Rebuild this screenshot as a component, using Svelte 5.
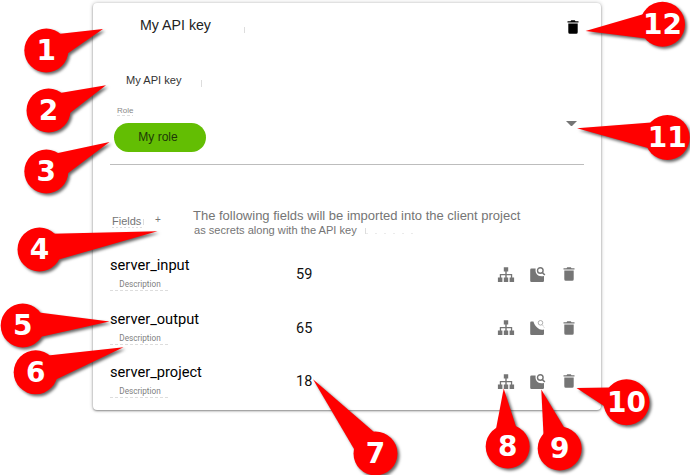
<script>
  const rows = [
    { name: 'server_input', value: 59 },
    { name: 'server_output', value: 65, faint: true },
    { name: 'server_project', value: 18 }
  ];

  const callouts = [
    { n: 1, x: 46.3, y: 50.5, r: 22, tip: '103,29', a: '58,34', b: '67,54' },
    { n: 2, x: 48.5, y: 110.5, r: 22, tip: '106,85.3', a: '60,93', b: '70,113' },
    { n: 3, x: 46.3, y: 171.5, r: 22, tip: '109.5,142', a: '58,153', b: '67,174' },
    { n: 4, x: 39.5, y: 249.5, r: 22, tip: '157.5,231.3', a: '52,233.7', b: '57,260' },
    { n: 5, x: 22.7, y: 325.5, r: 22, tip: '109.5,321.5', a: '39,312.5', b: '40,337' },
    { n: 6, x: 35.7, y: 372.3, r: 22, tip: '123.5,347.3', a: '48,355.5', b: '55,380' },
    { n: 7, x: 375.5, y: 453.5, r: 22, tip: '313,379.3', a: '374,432', b: '354,449' },
    { n: 8, x: 507.7, y: 446.5, r: 22, tip: '503.7,388.5', a: '496,429', b: '516.5,428' },
    { n: 9, x: 559.7, y: 448.5, r: 22, tip: '541.3,389.5', a: '543.5,435', b: '564.5,428' },
    { n: 10, x: 626.5, y: 402.3, r: 23, tip: '576.5,388', a: '610,387.5', b: '604,406' },
    { n: 11, x: 667.3, y: 137.5, r: 22.5, tip: '577,128.3', a: '651,122.5', b: '648,148' },
    { n: 12, x: 662.5, y: 24.3, r: 22.5, tip: '585.5,31', a: '643,14.3', b: '646,38.5' }
  ];
</script>

{#snippet trash()}
  <svg class="trash" viewBox="0 0 12 14">
    <path d="M.5 1.2h3L4.2.2h3.6l.7 1h3v1.4H.5zM1.3 3.4h9.4v8.8q0 1.5-1.5 1.5H2.8q-1.5 0-1.5-1.5z" />
  </svg>
{/snippet}

<main>
  <section class="card">
    <header>
      <h1>My API key</h1>
      <i class="trace t1"></i>
      {@render trash()}
    </header>
    <div class="name"><span>My API key</span><i class="trace t2"></i></div>
    <div class="select">
      <div>
        <div class="role"><span>Role</span></div>
        <div class="chip">My role</div>
      </div>
      <svg class="arrow" viewBox="0 0 11 5.5"><path d="M0 0h11L5.5 5.5z" /></svg>
    </div>
    <div class="fields">
      <span class="label">Fields</span><i class="bar"></i><span class="plus">+</span>
      <div class="hint">
        <p>The following fields will be imported into the client project</p>
        <p class="small">as secrets along with the API key<i class="bar"></i><i class="trace t3"></i></p>
      </div>
    </div>
    <div class="rows">
      {#each rows as row}
        <div class="row">
          <div class="key">
            <div class="title">{row.name}</div>
            <div class="desc">Description</div>
          </div>
          <div class="value">{row.value}</div>
          <div class="icons">
            <svg class="tree" viewBox="0 0 18 16">
              <path d="M6.8.3h4.4v4.3H9.7V7h5.5v3.6h1.9V15h-4.5v-4.4h1.3V8.3H9.7v2.3h1.5V15H6.8v-4.4h1.5V8.3H4.1v2.3h1.3V15H.9v-4.4h1.9V7h5.5V4.6H6.8z" />
            </svg>
            <svg class="search" viewBox="0 0 16 16">
              {#if row.faint}
                <path d="M1.2 1.6H3.4Q5 7 9.5 9.300q2 .8 4.500.2V13.800q0 1.200-1.200 1.200H1.400Q.2 15 .2 13.800V2.700Q.2 1.600 1.200 1.600z" />
                <circle cx="10.500" cy="2.800" r="2.300" fill="none" stroke="#999" stroke-width=".8" />
                <path d="M12.500 5l2 3" stroke="#bbb" stroke-dasharray="1 1" />
              {:else}
                <path d="M1.400 1.500h4.200Q5 6.500 8.200 8.600q2.300 1.200 5.800.5V13.800q0 1.200-1.200 1.200H1.400Q.2 15 .2 13.800V2.700Q.2 1.500 1.400 1.500z" />
                <circle cx="10.300" cy="3.500" r="2.800" fill="#fff" stroke="currentColor" stroke-width="1.400" />
                <path d="M12.300 5.500l2.500 2.500" stroke="currentColor" stroke-width="1.600" />
              {/if}
            </svg>
            {@render trash()}
          </div>
        </div>
      {/each}
    </div>
  </section>

  <svg class="callouts" viewBox="0 0 690 475">
    {#each callouts as c}
      <g class="callout">
        <circle cx={c.x} cy={c.y} r={c.r} />
        <polygon points="{c.a} {c.tip} {c.b} {c.x},{c.y}" />
      </g>
      <text x={c.x} y={c.y + 9.7}>{c.n}</text>
    {/each}
  </svg>
</main>

<style>
  :global(body) { background: #fff; }
  main {
    position: relative;
    width: 690px;
    height: 475px;
    box-sizing: border-box;
    padding: 3px 0 0 93px;
    overflow: hidden;
    font-family: "Liberation Sans", Arial, sans-serif;
    color: #757575;
  }
  h1, p { margin: 0; font-weight: 400; }
  svg { display: block; fill: currentColor; flex: none; }
  .card {
    width: 508px;
    height: 407px;
    box-sizing: border-box;
    padding: 0 17px;
    border-radius: 4px;
    background: #fff;
    box-shadow: 0 1px 2px rgba(0,0,0,.38), 0 0 4px rgba(0,0,0,.24);
  }
  header {
    height: 65px;
    display: flex;
    align-items: flex-start;
    padding: 14px 5px 0 30px;
    box-sizing: border-box;
    color: #000;
  }
  h1 { font-size: 14.2px; line-height: 17px; color: #222; white-space: nowrap; }
  header .trash { margin: 3px 0 0 auto; }
  .trash { width: 12px; height: 14px; }
  .trace {
    height: 1px;
    background: repeating-linear-gradient(90deg, #ddd 0 2px, transparent 2px 9px);
  }
  .t1 { width: 34px; height: 6px; margin-top: 10px; background: linear-gradient(#ddd, #ddd) right / 1px 6px no-repeat; }
  .name { height: 38px; padding: 4px 0 0 16px; box-sizing: border-box; display: flex; font-size: 11.1px; line-height: 17px; color: #333; }
  .t2 { width: 20px; height: 7px; margin-top: 8px; background: linear-gradient(#ddd, #ddd) right / 1px 7px no-repeat; }
  .select {
    height: 58px;
    padding: 0 7px 0 4px;
    border-bottom: 1px solid #bdbdbd;
    display: flex;
    justify-content: space-between;
    align-items: flex-start;
  }
  .role { height: 17px; box-sizing: border-box; padding-left: 3px; display: flex; align-items: flex-start; font-size: 8px; line-height: 10px; color: #888; }
  .role span { background: repeating-linear-gradient(90deg, #ddd 0 3px, transparent 3px 5px) bottom / 100% 1px no-repeat; }
  .chip {
    width: 92px;
    height: 29px;
    border-radius: 15px;
    background: #63be03;
    text-align: center;
    font-size: 12px;
    line-height: 28px;
    text-indent: -4px;
    color: #1d3808;
  }
  .arrow { width: 11px; height: 5.5px; margin-top: 14.500px; }
  .fields { height: 91px; display: flex; align-items: flex-start; padding: 42px 0 0 2px; box-sizing: border-box; }
  .label { width: 31px; font-size: 11px; line-height: 13px; margin-top: 8px; background: repeating-linear-gradient(90deg, #ddd 0 2px, transparent 2px 4px) bottom / 100% 1px no-repeat; }
  .bar { display: inline-block; width: 1px; height: 6px; background: #ddd; }
  .fields > .bar { margin-top: 12px; }
  .plus { width: 38px; padding-left: 11px; box-sizing: border-box; font-size: 10px; line-height: 12px; margin-top: 7px; }
  .hint { padding-left: 11px; white-space: nowrap; font-size: 13px; line-height: 16px; margin-top: 1px; }
  .hint .small { font-size: 11.1px; line-height: 13px; padding-left: 1px; }
  .small .bar { margin-left: 8px; }
  .t3 { display: inline-block; width: 48px; opacity: .6; }
  .rows { font-family: Roboto, sans-serif; }
  .row { height: 53.500px; display: flex; align-items: flex-start; }
  .row:last-child { height: 47px; }
  .key { width: 186px; }
  .title { font-size: 14.650px; line-height: 18px; color: #000; }
  .desc {
    width: 60px;
    text-align: center;
    font-size: 8.200px;
    line-height: 11px;
    margin-top: 5px;
    padding-bottom: 1px;
    color: #808080;
    background: repeating-linear-gradient(90deg, #ddd 0 3px, transparent 3px 5px) bottom / 100% 1px no-repeat;
  }
  .value { width: 201px; font-size: 14.500px; line-height: 18px; margin-top: 10px; color: #111; }
  .icons { display: flex; align-items: flex-start; margin-top: 10.500px; }
  .tree { width: 18px; height: 16px; }
  .search { width: 16px; height: 16px; margin-left: 15px; }
  .icons .trash { margin: .5px 0 0 17px; }
  .callouts { position: absolute; left: 0; top: 0; width: 690px; height: 475px; }
  .callout { fill: #f00; filter: drop-shadow(2px 2.500px 1.800px rgba(0,0,0,.6)); }
  .callouts text { font: bold 28px "DejaVu Sans", sans-serif; fill: #fff; text-anchor: middle; }
</style>
